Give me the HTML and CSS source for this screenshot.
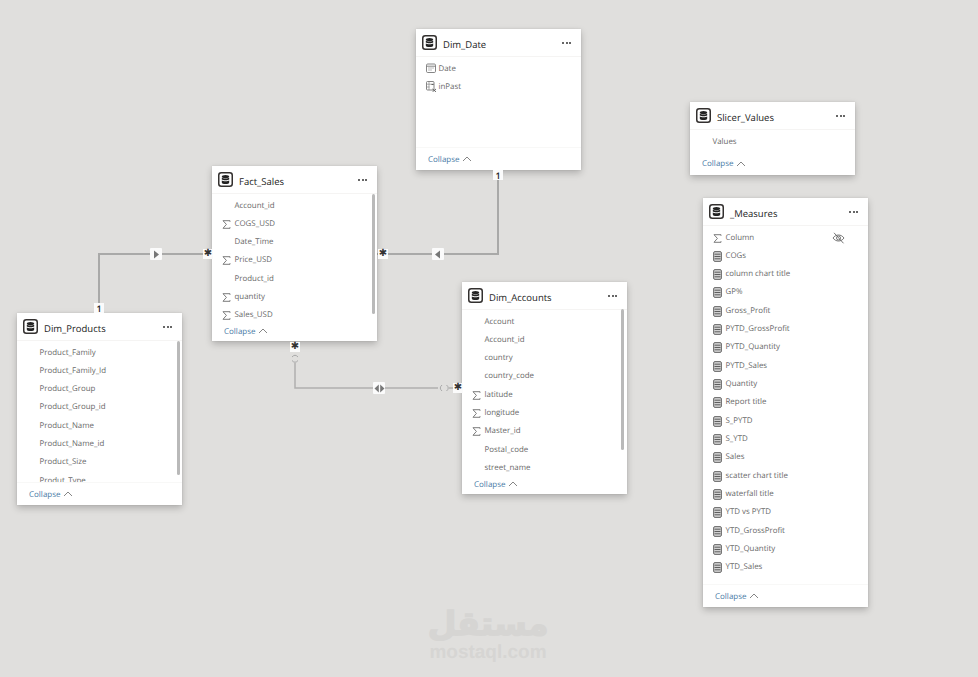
FILE: index.html
```html
<!DOCTYPE html>
<html lang="en">
<head>
<meta charset="utf-8">
<title>Model view</title>
<link rel="stylesheet" href="styles.css">
</head>
<body>
<svg class="defs" width="0" height="0" aria-hidden="true">
  <symbol id="tbl" viewBox="0 0 15 15">
    <rect x=".75" y=".75" width="13.5" height="13.5" rx="2.5" fill="#fff" stroke="#33302f" stroke-width="1.5"/>
    <ellipse cx="7.5" cy="4.6" rx="3.7" ry="1.6" fill="#222"/>
    <path d="M3.800 5.800c1 1 6.400 1 7.400 0v1.800c-1 1-6.400 1-7.400 0zM3.800 8.600c1 1 6.400 1 7.400 0v1.800c0 1-1.700 1.600-3.700 1.600s-3.700-.6-3.700-1.600z" fill="#222"/>
  </symbol>
  <symbol id="sigma" viewBox="0 0 9 9">
    <path d="M8 1.800V.7H1l3.400 3.700L1 8.300h7V7.200" fill="none" stroke="#6d6d6d" stroke-width=".9"/>
  </symbol>
  <symbol id="measure" viewBox="0 0 9 11">
    <rect x=".6" y=".6" width="7.800" height="9.800" rx="1.400" fill="#d0d0d0" stroke="#6a6a6a" stroke-width="1"/>
    <path d="M1.500 3.200h6M1.500 5.500h6M1.500 7.800h6" stroke="#5e5e5e" stroke-width="1"/>
  </symbol>
  <symbol id="calendar" viewBox="0 0 11 11">
    <rect x=".5" y="1" width="9" height="8.500" rx="1.200" fill="none" stroke="#777" stroke-width=".9"/>
    <path d="M.5 3.200h9" stroke="#777" stroke-width=".9"/>
    <path d="M2.500 5h1M4.500 5h1M6.500 5h1M2.500 7h1M4.500 7h1" stroke="#777" stroke-width="1"/>
  </symbol>
  <symbol id="calc" viewBox="0 0 11 11">
    <rect x=".5" y=".5" width="7.500" height="8.500" rx="1" fill="none" stroke="#777" stroke-width=".9"/>
    <path d="M.5 3.200h7.500M3 .5v8.500M.5 6h3" stroke="#888" stroke-width=".7"/>
    <path d="M6.500 8l3.500 2.800M10 8l-3.500 2.800" stroke="#555" stroke-width=".9"/>
    <path d="M5.500 3.500h2" stroke="#555" stroke-width=".9"/>
  </symbol>
  <symbol id="eye" viewBox="0 0 13 12">
    <path d="M1 6c2.800-4 8.200-4 11 0-2.800 4-8.200 4-11 0z" fill="none" stroke="#666" stroke-width=".9"/>
    <circle cx="6.500" cy="6" r="2" fill="none" stroke="#666" stroke-width=".9"/>
    <path d="M2 .8l9.500 10.500" stroke="#666" stroke-width=".9"/>
  </symbol>
  <symbol id="chev" viewBox="0 0 10 6">
    <path d="M1 5l4-4 4 4" fill="none" stroke="#666" stroke-width=".8"/>
  </symbol>
</svg>

<main class="canvas">
  <svg class="wires" width="978" height="677" aria-hidden="true">
    <path class="wire" d="M99 313V254H212"/>
    <path class="wire" d="M377 254H498V170"/>
    <path class="wire thin" d="M295 363V388H438"/>
    <path class="wire thin" d="M449 388H454"/>
    <path class="arc" d="M292 357q3-3.500 6 0M292 360.500q3 3.500 6 0"/>
    <path class="arc" d="M442 385q-3.500 3 0 6M446.500 385q3.500 3 0 6"/>
  </svg>

  <span class="badge b-prod-one">1</span>
  <span class="badge b-date-one">1</span>
  <span class="badge star b-fact-left">✱</span>
  <span class="badge star b-fact-right">✱</span>
  <span class="badge star b-fact-bottom">✱</span>
  <span class="badge star b-acc-left">✱</span>
  <span class="badge arrow b-arrow-right"><svg width="8" height="9"><path d="M2 .5l5 4-5 4z" fill="#777"/></svg></span>
  <span class="badge arrow b-arrow-left"><svg width="8" height="9"><path d="M6 .5l-5 4 5 4z" fill="#777"/></svg></span>
  <span class="badge arrow b-arrow-both"><svg width="11" height="9"><path d="M4.800.5L.5 4.500l4.300 4zM6.200.5l4.300 4-4.300 4z" fill="#777"/></svg></span>

  <section class="card c-date">
    <header class="head"><svg class="tbl"><use href="#tbl"/></svg><h2>Dim_Date</h2><span class="dots"><i></i><i></i><i></i></span></header>
    <ul class="rows">
      <li><svg class="ic ic-wide"><use href="#calendar"/></svg>Date</li>
      <li><svg class="ic ic-wide"><use href="#calc"/></svg>inPast</li>
    </ul>
    <footer class="foot">Collapse<svg class="chev"><use href="#chev"/></svg></footer>
  </section>

  <section class="card c-fact">
    <header class="head"><svg class="tbl"><use href="#tbl"/></svg><h2>Fact_Sales</h2><span class="dots"><i></i><i></i><i></i></span></header>
    <ul class="rows">
      <li>Account_id</li>
      <li><svg class="ic"><use href="#sigma"/></svg>COGS_USD</li>
      <li>Date_Time</li>
      <li><svg class="ic"><use href="#sigma"/></svg>Price_USD</li>
      <li>Product_id</li>
      <li><svg class="ic"><use href="#sigma"/></svg>quantity</li>
      <li><svg class="ic"><use href="#sigma"/></svg>Sales_USD</li>
    </ul>
    <span class="bar bar-fact"></span>
    <footer class="foot foot-short">Collapse<svg class="chev"><use href="#chev"/></svg></footer>
  </section>

  <section class="card c-prod">
    <header class="head"><svg class="tbl"><use href="#tbl"/></svg><h2>Dim_Products</h2><span class="dots"><i></i><i></i><i></i></span></header>
    <ul class="rows">
      <li>Product_Family</li>
      <li>Product_Family_Id</li>
      <li>Product_Group</li>
      <li>Product_Group_id</li>
      <li>Product_Name</li>
      <li>Product_Name_id</li>
      <li>Product_Size</li>
      <li>Produt_Type</li>
    </ul>
    <span class="bar bar-prod"></span>
    <footer class="foot">Collapse<svg class="chev"><use href="#chev"/></svg></footer>
  </section>

  <section class="card c-acc">
    <header class="head"><svg class="tbl"><use href="#tbl"/></svg><h2>Dim_Accounts</h2><span class="dots"><i></i><i></i><i></i></span></header>
    <ul class="rows">
      <li>Account</li>
      <li>Account_id</li>
      <li>country</li>
      <li>country_code</li>
      <li><svg class="ic"><use href="#sigma"/></svg>latitude</li>
      <li><svg class="ic"><use href="#sigma"/></svg>longitude</li>
      <li><svg class="ic"><use href="#sigma"/></svg>Master_id</li>
      <li>Postal_code</li>
      <li>street_name</li>
    </ul>
    <span class="bar bar-acc"></span>
    <footer class="foot foot-short">Collapse<svg class="chev"><use href="#chev"/></svg></footer>
  </section>

  <section class="card c-slicer">
    <header class="head"><svg class="tbl"><use href="#tbl"/></svg><h2>Slicer_Values</h2><span class="dots"><i></i><i></i><i></i></span></header>
    <ul class="rows">
      <li>Values</li>
    </ul>
    <footer class="foot foot-plain">Collapse<svg class="chev"><use href="#chev"/></svg></footer>
  </section>

  <section class="card c-meas">
    <header class="head"><svg class="tbl"><use href="#tbl"/></svg><h2>_Measures</h2><span class="dots"><i></i><i></i><i></i></span></header>
    <ul class="rows">
      <li><svg class="ic"><use href="#sigma"/></svg>Column<svg class="eye"><use href="#eye"/></svg></li>
      <li><svg class="ic"><use href="#measure"/></svg>COGs</li>
      <li><svg class="ic"><use href="#measure"/></svg>column chart title</li>
      <li><svg class="ic"><use href="#measure"/></svg>GP%</li>
      <li><svg class="ic"><use href="#measure"/></svg>Gross_Profit</li>
      <li><svg class="ic"><use href="#measure"/></svg>PYTD_GrossProfit</li>
      <li><svg class="ic"><use href="#measure"/></svg>PYTD_Quantity</li>
      <li><svg class="ic"><use href="#measure"/></svg>PYTD_Sales</li>
      <li><svg class="ic"><use href="#measure"/></svg>Quantity</li>
      <li><svg class="ic"><use href="#measure"/></svg>Report title</li>
      <li><svg class="ic"><use href="#measure"/></svg>S_PYTD</li>
      <li><svg class="ic"><use href="#measure"/></svg>S_YTD</li>
      <li><svg class="ic"><use href="#measure"/></svg>Sales</li>
      <li><svg class="ic"><use href="#measure"/></svg>scatter chart title</li>
      <li><svg class="ic"><use href="#measure"/></svg>waterfall title</li>
      <li><svg class="ic"><use href="#measure"/></svg>YTD vs PYTD</li>
      <li><svg class="ic"><use href="#measure"/></svg>YTD_GrossProfit</li>
      <li><svg class="ic"><use href="#measure"/></svg>YTD_Quantity</li>
      <li><svg class="ic"><use href="#measure"/></svg>YTD_Sales</li>
    </ul>
    <footer class="foot">Collapse<svg class="chev"><use href="#chev"/></svg></footer>
  </section>

  <div class="mark">
    <div class="mark-ar" lang="ar" dir="rtl">مستقل</div>
    <div class="mark-en">mostaql.com</div>
  </div>
</main>
</body>
</html>
```
FILE: styles.css
```css
* { box-sizing: border-box; }
html, body { margin: 0; padding: 0; }
body { width: 978px; height: 677px; overflow: hidden; background: #e0dfdd; font-family: "Open Sans", "Liberation Sans", sans-serif; text-rendering: geometricPrecision; }
.defs { position: absolute; }
.canvas { position: relative; width: 978px; height: 677px; }
.wires { position: absolute; left: 0; top: 0; }
.wire { fill: none; stroke: #a9a9a8; stroke-width: 2; }
.wire.thin { stroke: #b0b0ae; stroke-width: 1.5; }
.arc { fill: none; stroke: #a8a8a8; stroke-width: 1; }

.card { position: absolute; display: flex; flex-direction: column; width: 165px; background: #fff; box-shadow: 0 3px 7px rgba(0,0,0,.22), 0 0 2px rgba(0,0,0,.1); }
.c-date { left: 416px; top: 29px; height: 141px; }
.c-fact { left: 212px; top: 166px; height: 175px; }
.c-prod { left: 17px; top: 313px; height: 192px; }
.c-acc { left: 462px; top: 282px; height: 212px; }
.c-slicer { left: 690px; top: 102px; height: 73px; }
.c-meas { left: 703px; top: 198px; height: 409px; }

.head { flex: none; display: flex; align-items: center; height: 28px; padding: 0 10px 0 6px; border-bottom: 1px solid #f5f4f3; }
.tbl { width: 15px; height: 15px; flex: none; margin-right: 6px; }
.head h2 { flex: 1; margin: 0; padding-top: 3px; font-size: 9.500px; font-weight: 400; color: #1b1b1b; }
.dots { display: flex; gap: 1.500px; padding-top: 1px; }
.dots i { width: 2px; height: 2px; border-radius: 50%; background: #333; }

.rows { flex: 1; min-height: 0; overflow: hidden; list-style: none; margin: 0; padding: 2.500px 0 0 22.500px; }
.rows li { position: relative; height: 18.330px; line-height: 18.330px; font-size: 7.900px; color: #6a6a6a; white-space: nowrap; }
.ic { position: absolute; left: -12.500px; top: 4px; width: 9px; height: 11px; }
.ic-wide { left: -13px; top: 3.500px; width: 11px; height: 11px; }
.eye { position: absolute; left: 106.500px; top: 3px; width: 13px; height: 12px; }

.foot { flex: none; display: flex; align-items: center; gap: 2px; height: 23px; padding-left: 12px; border-top: 1px solid #f8f8f7; font-size: 8px; color: #4a7ba6; }
.foot-plain { border-top: 0; }
.foot-short { height: 20px; border-top: 0; }
.chev { width: 10px; height: 6px; }

.bar { position: absolute; width: 3px; border-radius: 2px; background: #b9b9b9; }
.bar-fact { left: 160px; top: 28px; height: 120px; }
.bar-prod { left: 160px; top: 28px; height: 134px; }
.bar-acc { left: 159px; top: 27px; height: 141px; }

.badge { position: absolute; z-index: 2; display: flex; align-items: center; justify-content: center; width: 10px; height: 10px; background: #fbfbfb; color: #222; font-size: 9px; line-height: 1; font-weight: 600; }
.badge.star { font-family: "DejaVu Sans", sans-serif; font-size: 10px; font-weight: 400; color: #333; }
.badge.arrow { width: 12px; height: 12px; border-radius: 1px; }
.b-prod-one { left: 94px; top: 303px; }
.b-date-one { left: 493px; top: 170px; }
.b-fact-left { left: 203px; top: 249px; }
.b-fact-right { left: 378px; top: 249px; }
.b-fact-bottom { left: 290px; top: 342px; }
.b-acc-left { left: 453px; top: 383px; }
.b-arrow-right { left: 150px; top: 248px; }
.b-arrow-left { left: 432px; top: 248px; }
.b-arrow-both { left: 373px; top: 382px; }

.mark { position: absolute; left: 420px; top: 603px; width: 136px; text-align: center; color: #d6d5d3; }
.mark-ar { height: 41px; font-family: "DejaVu Sans", sans-serif; font-size: 33px; font-weight: 700; line-height: 41px; -webkit-text-stroke: 1.500px #d6d5d3; }
.mark-en { font-family: "Liberation Sans", sans-serif; font-size: 19px; font-weight: 700; line-height: 18px; }
```
